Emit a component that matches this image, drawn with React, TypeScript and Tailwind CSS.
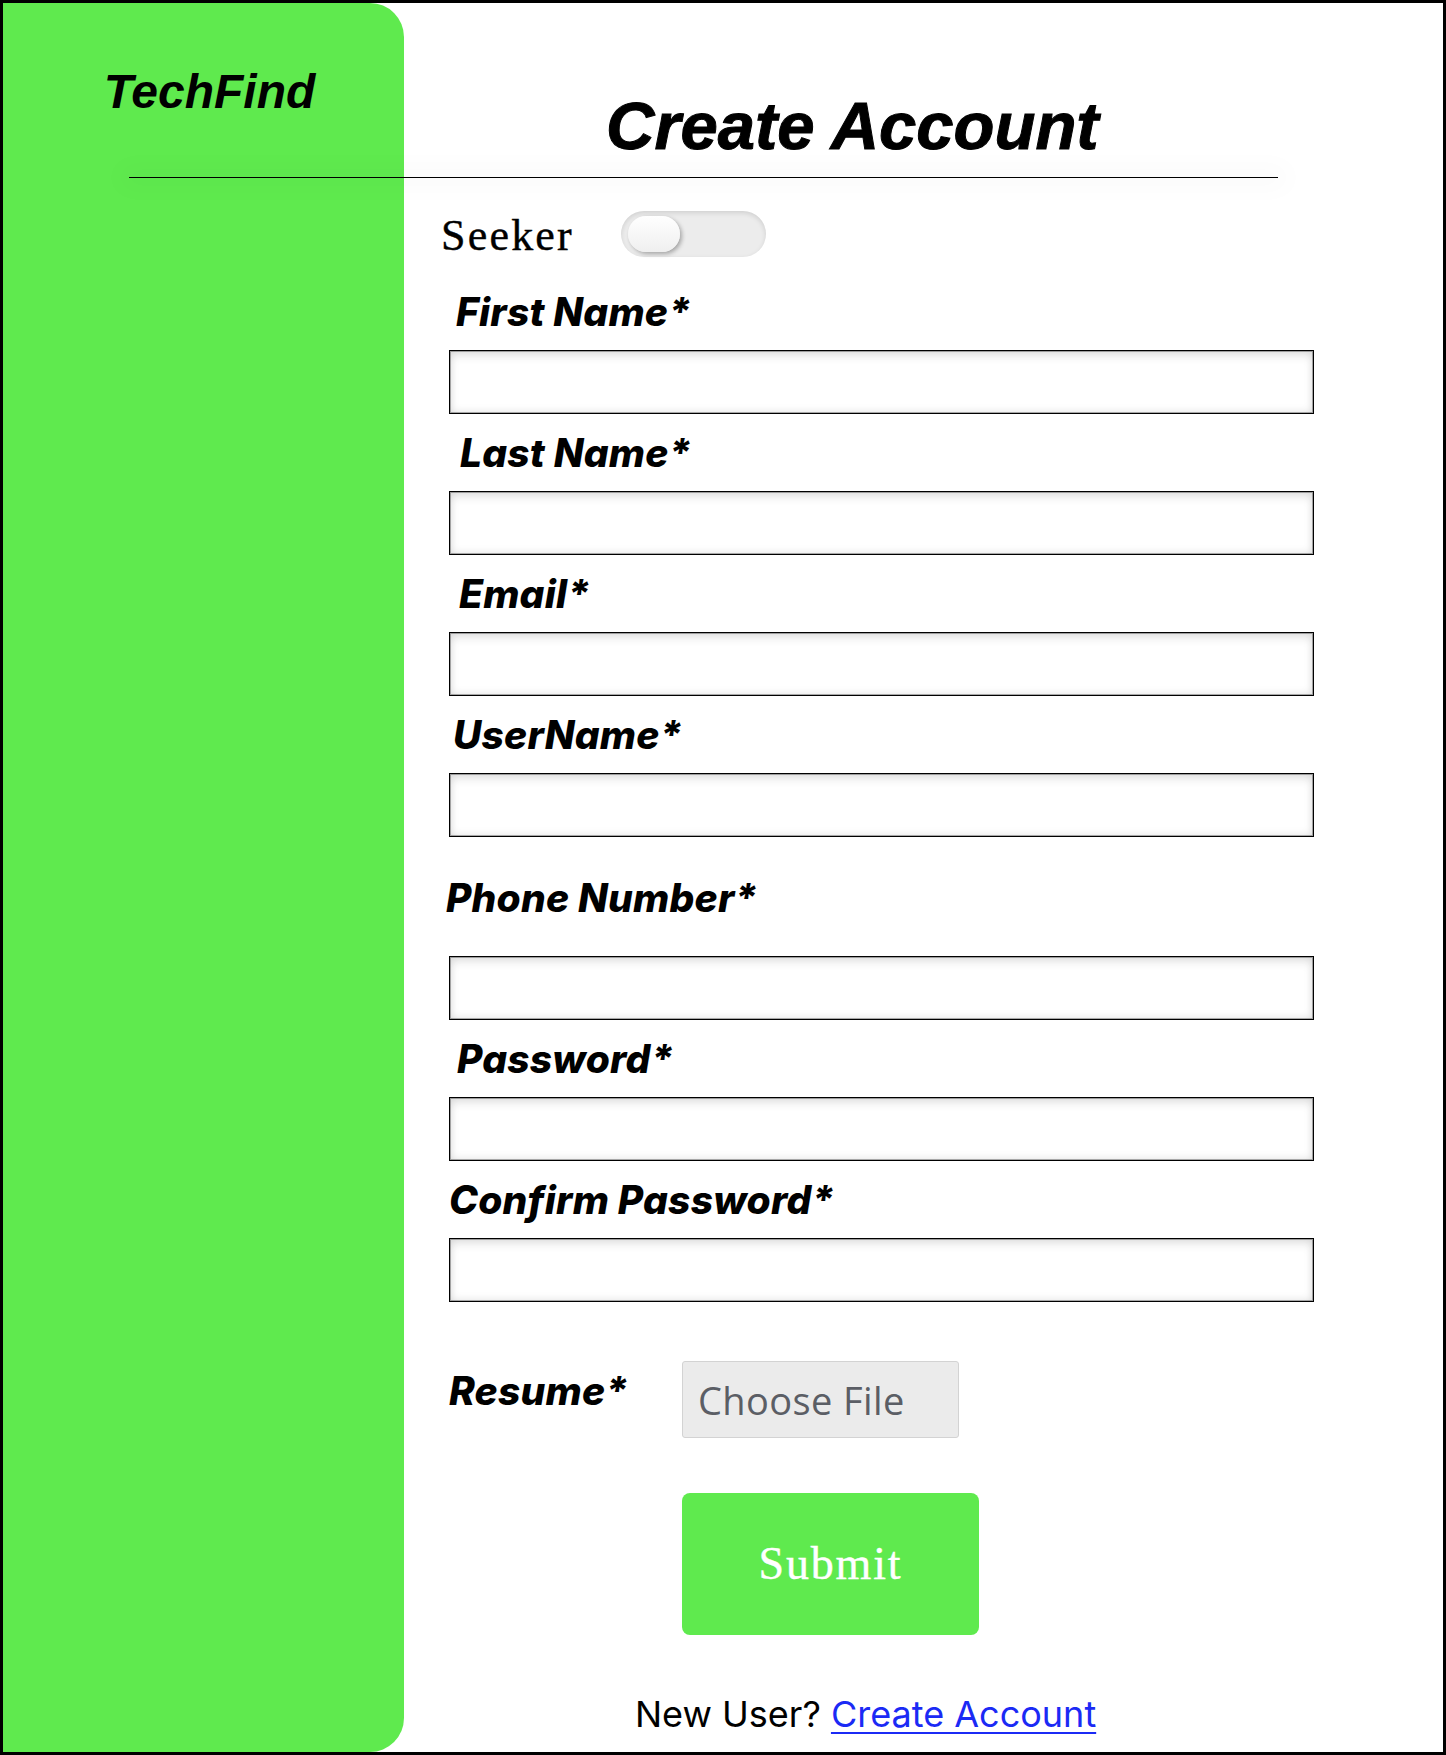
import React from "react";

const inter = { fontFamily: "Inter, 'Liberation Sans', sans-serif" };
const inputCls =
  "w-[865px] h-[64px] border border-black bg-white outline-none shadow-[inset_0_0_0_1px_rgba(0,0,0,0.3),inset_0_0_10px_rgba(0,0,0,0.14),inset_0_7px_9px_rgba(0,0,0,0.06)]";
const labelCls = "text-[39px] leading-[39px] font-extrabold italic text-black tracking-[0.005em]";

function Field({ label, offset }: { label: string; offset: string }) {
  return (
    <div className="flex flex-col">
      <div className={`${labelCls} ${offset}`} style={inter}>
        {label}
      </div>
      <input type="text" className={`mt-[19px] ${inputCls}`} />
    </div>
  );
}

export default function App() {
  return (
    <div className="w-[1446px] h-[1755px] border-[3px] border-black bg-white flex overflow-hidden">
      <aside className="w-[401px] shrink-0 bg-[#5fea4e] rounded-r-[34px] pt-[65px] pl-[12px] text-center">
        <div
          className="text-[48px] leading-[48px] font-bold italic text-black"
          style={{ fontFamily: "'Liberation Sans', Arial, sans-serif" }}
        >
          TechFind
        </div>
      </aside>

      <main className="flex-1 flex flex-col">
        {/* header */}
        <div className="pt-[89px] -ml-[275px] w-[1160px]">
          <h1
            className="pl-[477px] text-[67px] leading-[67px] font-bold italic text-black [-webkit-text-stroke:1px_black]"
            style={{ fontFamily: "'Liberation Sans', Arial, sans-serif" }}
          >
            Create Account
          </h1>
          <div className="mt-[18px] h-px w-[1149px] bg-black shadow-[0_0_26px_10px_rgba(0,0,0,0.025)]" />
        </div>

        {/* seeker toggle */}
        <div className="mt-[33px] pl-[37px] flex items-center h-[46px]">
          <span
            className="w-[180px] text-[44px] leading-[44px] tracking-[0.05em] text-black translate-y-[2px] [-webkit-text-stroke:0.4px_black]"
            style={{ fontFamily: "'Liberation Serif', 'Times New Roman', serif" }}
          >
            Seeker
          </span>
          <div className="w-[145px] h-[46px] rounded-full bg-[#ececec] shadow-[inset_0_2px_5px_rgba(0,0,0,0.12)] flex items-center pl-[7px]">
            <div className="w-[52px] h-[36px] rounded-full bg-gradient-to-b from-white to-[#efefef] shadow-[2px_2px_4px_rgba(0,0,0,0.3)]" />
          </div>
        </div>

        {/* fields */}
        <div className="mt-[35px] pl-[45px] flex flex-col gap-[19px]">
          <Field label="First Name*" offset="ml-[7px]" />
          <Field label="Last Name*" offset="ml-[11px]" />
          <Field label="Email*" offset="ml-[10px]" />
          <Field label="UserName*" offset="ml-[4px]" />
          <div className="flex flex-col pt-[22px]">
            <div className={`${labelCls} -ml-[3px]`} style={inter}>
              Phone Number*
            </div>
            <input type="text" className={`mt-[39px] ${inputCls}`} />
          </div>
          <Field label="Password*" offset="ml-[8px]" />
          <Field label="Confirm Password*" offset="ml-[0px]" />
        </div>

        {/* resume */}
        <div className="mt-[59px] pl-[45px] flex items-start">
          <div className={`w-[233px] mt-[10px] ${labelCls}`} style={inter}>
            Resume*
          </div>
          <button
            type="button"
            className="w-[277px] h-[77px] bg-[#ebebeb] border border-[#d3d3d3] rounded-[3px] flex items-center pl-[15px] text-[38px] leading-[38px] tracking-[0.01em] text-[#5b5e65]"
            style={{ fontFamily: "'Open Sans', sans-serif" }}
          >
            Choose File
          </button>
        </div>

        {/* submit */}
        <div className="mt-[55px] pl-[278px]">
          <button
            type="button"
            className="w-[297px] h-[142px] bg-[#5fea4e] rounded-[8px] flex items-center justify-center text-white text-[46px] leading-[46px] tracking-[0.04em] [-webkit-text-stroke:0.4px_white]"
            style={{ fontFamily: "'Liberation Serif', 'Times New Roman', serif" }}
          >
            Submit
          </button>
        </div>

        {/* footer link */}
        <div className="mt-[61px] pl-[231px] text-[36px] leading-[36px] text-black whitespace-nowrap" style={inter}>
          New User?{" "}
          <a href="#" className="text-[#1b2af5] underline decoration-[2px] underline-offset-[5px]">
            Create Account
          </a>
        </div>
      </main>
    </div>
  );
}
